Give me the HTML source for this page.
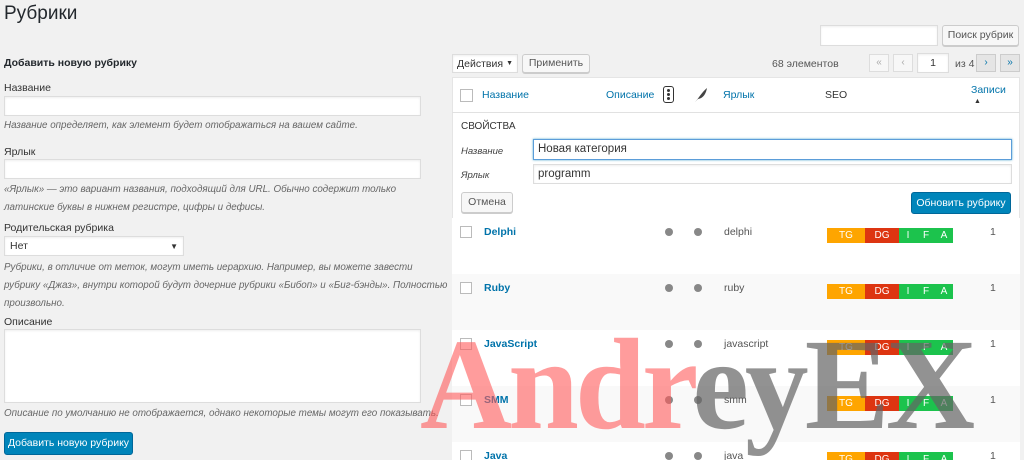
<!DOCTYPE html>
<html style="width:1024px;height:460px;overflow:hidden"><head><meta charset="utf-8"><style>
*{box-sizing:border-box}
body{margin:0;width:1024px;height:460px;overflow:hidden;background:#f1f1f1;font-family:"Liberation Sans",sans-serif;font-size:10.5px;color:#444;position:relative;white-space:nowrap}
.a{position:absolute}
.inp{position:absolute;background:#fff;border:1px solid #ddd;box-shadow:inset 0 1px 2px rgba(0,0,0,.07)}
.btn{position:absolute;background:#f7f7f7;border:1px solid #ccc;border-radius:3px;color:#555;font-size:10.5px;text-align:center;box-shadow:0 1px 0 #ccc}
.hint{position:absolute;font-style:italic;color:#666;font-size:9.8px;line-height:18px;white-space:normal}
.lbl{position:absolute;font-size:10.5px;color:#333}
.row{position:absolute;left:452px;width:568px;height:56px}
.cb{position:absolute;left:8px;width:12px;height:12px;border:1px solid #bbb;background:#fff}
.nm{position:absolute;left:32px;color:#0073aa;font-weight:bold;font-size:10.5px}
.dot{position:absolute;width:8px;height:8px;border-radius:50%;background:#888}
.sl{position:absolute;left:272px;color:#555}
.seo{position:absolute;left:375px;height:15px;display:flex;font-size:10px;color:#fff;line-height:15px;text-align:center}
.seo span{display:block}
.cnt{position:absolute;left:538px;color:#555}
.pg{position:absolute;top:54px;width:20px;height:18px;border:1px solid #ddd;background:#f7f7f7;color:#aaa;text-align:center;line-height:16px;font-size:10px}
</style></head><body>
<div class="a" style="left:4px;top:3px;font-size:19px;color:#23282d">Рубрики</div>
<div class="inp" style="left:820px;top:25px;width:118px;height:21px"></div>
<div class="btn" style="left:942px;top:25px;width:77px;height:21px;line-height:19px">Поиск рубрик</div>

<div class="a" style="left:4px;top:57px;font-weight:bold;font-size:10.5px;color:#23282d">Добавить новую рубрику</div>
<div class="lbl" style="left:4px;top:82px">Название</div>
<div class="inp" style="left:4px;top:96px;width:417px;height:20px"></div>
<div class="hint" style="left:4px;top:117px">Название определяет, как элемент будет отображаться на вашем сайте.</div>
<div class="lbl" style="left:4px;top:146px">Ярлык</div>
<div class="inp" style="left:4px;top:159px;width:417px;height:20px"></div>
<div class="hint" style="left:4px;top:181px;width:445px">«Ярлык» — это вариант названия, подходящий для URL. Обычно содержит только латинские буквы в нижнем регистре, цифры и дефисы.</div>
<div class="lbl" style="left:4px;top:222px">Родительская рубрика</div>
<div class="inp" style="left:4px;top:236px;width:180px;height:20px;padding:3px 5px;color:#333">Нет<span style="position:absolute;right:5px;font-size:8px;top:5px">▼</span></div>
<div class="hint" style="left:4px;top:259px;width:445px">Рубрики, в отличие от меток, могут иметь иерархию. Например, вы можете завести рубрику «Джаз», внутри которой будут дочерние рубрики «Бибоп» и «Биг-бэнды». Полностью произвольно.</div>
<div class="lbl" style="left:4px;top:316px">Описание</div>
<div class="inp" style="left:4px;top:329px;width:417px;height:74px"></div>
<div class="hint" style="left:4px;top:405px">Описание по умолчанию не отображается, однако некоторые темы могут его показывать.</div>
<div class="a" style="left:4px;top:432px;width:129px;height:23px;background:#0085ba;border:1px solid #006799;border-radius:3px;color:#fff;text-align:center;line-height:21px">Добавить новую рубрику</div>

<div class="inp" style="left:452px;top:54px;width:66px;height:19px;padding:3px 4px;color:#333">Действия <span style="font-size:7px;position:absolute;right:4px;top:5px">▼</span></div>
<div class="btn" style="left:522px;top:54px;width:68px;height:19px;line-height:17px">Применить</div>
<div class="a" style="left:772px;top:58px;color:#555">68 элементов</div>
<div class="pg" style="left:869px">«</div>
<div class="pg" style="left:893px">‹</div>
<div class="inp" style="left:917px;top:53px;width:32px;height:20px;text-align:center;line-height:18px;color:#333">1</div>
<div class="a" style="left:955px;top:58px;color:#555">из 4</div>
<div class="pg" style="left:976px;background:#e5e5e5;color:#0073aa;border-color:#ccc">›</div>
<div class="pg" style="left:1000px;background:#e5e5e5;color:#0073aa;border-color:#ccc">»</div>

<div class="a" style="left:452px;top:77px;width:568px;height:383px;background:#fff;border:1px solid #e5e5e5"></div>
<div class="a" style="left:452px;top:112px;width:568px;height:1px;background:#e1e1e1"></div>
<div class="cb" style="left:460px;top:89px;width:13px;height:13px"></div>
<div class="a" style="left:482px;top:89px;color:#0073aa">Название</div>
<div class="a" style="left:606px;top:89px;color:#0073aa">Описание</div>
<div class="a" style="left:663px;top:86px;width:11px;height:17px;border:1.5px solid #333;border-radius:3px"><div style="width:3px;height:3px;background:#333;border-radius:50%;margin:2px auto 0"></div><div style="width:3px;height:3px;background:#333;border-radius:50%;margin:1px auto 0"></div><div style="width:3px;height:3px;background:#333;border-radius:50%;margin:1px auto 0"></div></div>
<svg class="a" style="left:694px;top:87px" width="14" height="16" viewBox="0 0 14 16"><path d="M1 15 C5 11 7 6 13 1 C12 6 10 11 4 12 Z" fill="#444"/></svg>
<div class="a" style="left:723px;top:89px;color:#0073aa">Ярлык</div>
<div class="a" style="left:825px;top:89px;color:#333">SEO</div>
<div class="a" style="left:971px;top:84px;color:#0073aa">Записи</div>
<div class="a" style="left:974px;top:98px;font-size:7px;color:#333">▲</div>

<div class="a" style="left:461px;top:121px;color:#333;font-size:10px">СВОЙСТВА</div>
<div class="a" style="left:461px;top:146px;font-style:italic;font-size:9.5px;color:#444">Название</div>
<div class="inp" style="left:533px;top:139px;width:479px;height:21px;border-color:#5b9dd9;box-shadow:0 0 2px rgba(30,140,190,.8);padding:3px 4px;font-size:11.5px;color:#333">Новая категория</div>
<div class="a" style="left:461px;top:170px;font-style:italic;font-size:9.5px;color:#444">Ярлык</div>
<div class="inp" style="left:533px;top:164px;width:479px;height:20px;padding:3px 4px;font-size:11.5px;color:#333">programm</div>
<div class="btn" style="left:461px;top:192px;width:52px;height:21px;line-height:19px">Отмена</div>
<div class="a" style="left:911px;top:192px;width:100px;height:22px;background:#0085ba;border:1px solid #006799;border-radius:3px;color:#fff;text-align:center;line-height:20px">Обновить рубрику</div>

<div class="row" style="top:218px;background:#fff"><div class="cb" style="top:8px"></div><div class="nm" style="top:8px">Delphi</div><div class="dot" style="left:213px;top:10px"></div><div class="dot" style="left:242px;top:10px"></div><div class="sl" style="top:8px">delphi</div><div class="seo" style="top:10px"><span style="width:38px;background:#fea500">TG</span><span style="width:34px;background:#dd3511">DG</span><span style="width:18px;background:#1cc34d">I</span><span style="width:18px;background:#1cc34d">F</span><span style="width:18px;background:#1cc34d">A</span></div><div class="cnt" style="top:8px">1</div></div>
<div class="row" style="top:274px;background:#f9f9f9"><div class="cb" style="top:8px"></div><div class="nm" style="top:8px">Ruby</div><div class="dot" style="left:213px;top:10px"></div><div class="dot" style="left:242px;top:10px"></div><div class="sl" style="top:8px">ruby</div><div class="seo" style="top:10px"><span style="width:38px;background:#fea500">TG</span><span style="width:34px;background:#dd3511">DG</span><span style="width:18px;background:#1cc34d">I</span><span style="width:18px;background:#1cc34d">F</span><span style="width:18px;background:#1cc34d">A</span></div><div class="cnt" style="top:8px">1</div></div>
<div class="row" style="top:330px;background:#fff"><div class="cb" style="top:8px"></div><div class="nm" style="top:8px">JavaScript</div><div class="dot" style="left:213px;top:10px"></div><div class="dot" style="left:242px;top:10px"></div><div class="sl" style="top:8px">javascript</div><div class="seo" style="top:10px"><span style="width:38px;background:#fea500">TG</span><span style="width:34px;background:#dd3511">DG</span><span style="width:18px;background:#1cc34d">I</span><span style="width:18px;background:#1cc34d">F</span><span style="width:18px;background:#1cc34d">A</span></div><div class="cnt" style="top:8px">1</div></div>
<div class="row" style="top:386px;background:#f9f9f9"><div class="cb" style="top:8px"></div><div class="nm" style="top:8px">SMM</div><div class="dot" style="left:213px;top:10px"></div><div class="dot" style="left:242px;top:10px"></div><div class="sl" style="top:8px">smm</div><div class="seo" style="top:10px"><span style="width:38px;background:#fea500">TG</span><span style="width:34px;background:#dd3511">DG</span><span style="width:18px;background:#1cc34d">I</span><span style="width:18px;background:#1cc34d">F</span><span style="width:18px;background:#1cc34d">A</span></div><div class="cnt" style="top:8px">1</div></div>
<div class="row" style="top:442px;height:18px;overflow:hidden;background:#fff"><div class="cb" style="top:8px"></div><div class="nm" style="top:8px">Java</div><div class="dot" style="left:213px;top:10px"></div><div class="dot" style="left:242px;top:10px"></div><div class="sl" style="top:8px">java</div><div class="seo" style="top:10px;height:8px;overflow:hidden"><span style="width:38px;background:#fea500">TG</span><span style="width:34px;background:#dd3511">DG</span><span style="width:18px;background:#1cc34d">I</span><span style="width:18px;background:#1cc34d">F</span><span style="width:18px;background:#1cc34d">A</span></div><div class="cnt" style="top:8px">1</div></div>

<div class="a" style="left:420px;top:320px;height:140px;overflow:hidden;font-family:'Liberation Serif',serif;font-weight:bold;font-size:130px;line-height:130px;letter-spacing:-4px;white-space:nowrap;transform:scaleX(0.98);transform-origin:left top"><span style="color:rgba(255,90,90,.6)">Andr</span><span style="color:rgba(100,100,100,.7)">eyEX</span></div>
</body></html>
